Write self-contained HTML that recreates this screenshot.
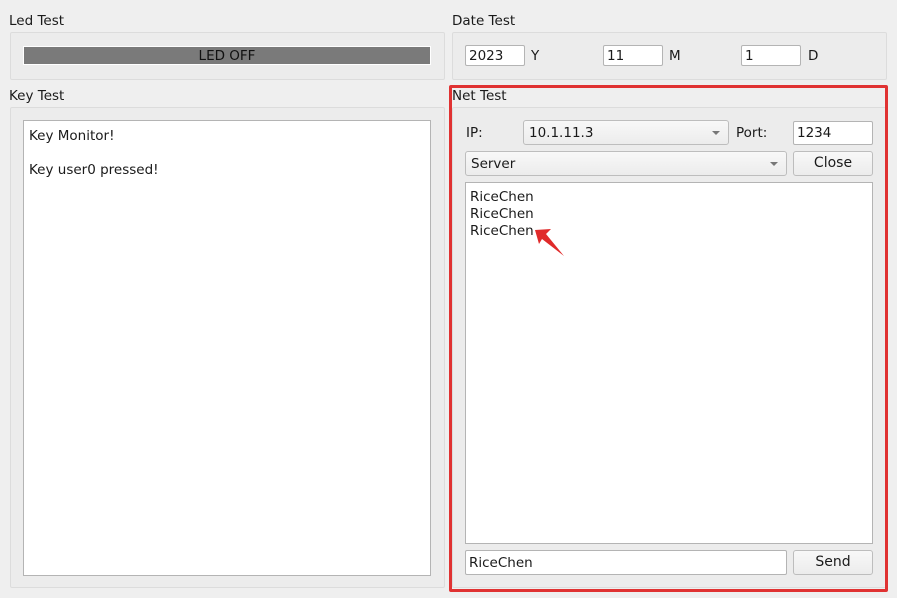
<!DOCTYPE html>
<html><head><meta charset="utf-8"><style>
*{box-sizing:border-box;margin:0;padding:0}
body{width:897px;height:598px;background:#efefef;position:relative;overflow:hidden;font-family:"DejaVu Sans","Liberation Sans",sans-serif;font-size:13.5px;color:#1a1a1a}
.a{position:absolute}
.lbl{position:absolute;font-size:13.5px;line-height:16px}
.grp{position:absolute;border:1px solid #dcdcdc;border-radius:2px;background:#ececec}
.inp{position:absolute;background:#fff;border:1px solid #b4b4b4;border-radius:2px;padding-left:3px;line-height:21px}
.cmb{position:absolute;background:linear-gradient(#f8f8f8,#ececec);border:1px solid #bdbdbd;border-radius:3px;padding-left:5px;line-height:24px}
.cmb:after{content:"";position:absolute;right:8px;top:10px;border-left:4px solid transparent;border-right:4px solid transparent;border-top:4px solid #777}
.btn{position:absolute;background:linear-gradient(#f8f8f8,#ececec);border:1px solid #bdbdbd;border-radius:3px;text-align:center;line-height:23px;font-size:14px}
.txt{position:absolute;background:#fff;border:1px solid #b4b4b4}
</style></head><body>
<div class="lbl" style="left:9px;top:13px">Led Test</div>
<div class="grp" style="left:10px;top:32px;width:435px;height:48px"></div>
<div class="a" style="left:23px;top:46px;width:408px;height:19px;background:#7a7a7a;border:1px solid #fff;text-align:center;line-height:18px;color:#111">LED OFF</div>

<div class="lbl" style="left:9px;top:88px">Key Test</div>
<div class="grp" style="left:10px;top:107px;width:435px;height:481px"></div>
<div class="txt" style="left:23px;top:120px;width:408px;height:456px;padding:7px 5px;line-height:17px">Key Monitor!<br><br>Key user0 pressed!</div>

<div class="lbl" style="left:452px;top:13px">Date Test</div>
<div class="grp" style="left:452px;top:32px;width:435px;height:48px"></div>
<div class="inp" style="left:465px;top:45px;width:60px;height:21px">2023</div>
<div class="lbl" style="left:531px;top:48px">Y</div>
<div class="inp" style="left:603px;top:45px;width:60px;height:21px">11</div>
<div class="lbl" style="left:669px;top:48px">M</div>
<div class="inp" style="left:741px;top:45px;width:60px;height:21px">1</div>
<div class="lbl" style="left:808px;top:48px">D</div>

<div class="lbl" style="left:452px;top:88px">Net Test</div>
<div class="grp" style="left:452px;top:107px;width:435px;height:481px"></div>
<div class="lbl" style="left:466px;top:125px">IP:</div>
<div class="cmb" style="left:523px;top:120px;width:206px;height:25px">10.1.11.3</div>
<div class="lbl" style="left:736px;top:125px">Port:</div>
<div class="inp" style="left:793px;top:121px;width:80px;height:24px;line-height:23px">1234</div>
<div class="cmb" style="left:465px;top:151px;width:322px;height:25px">Server</div>
<div class="btn" style="left:793px;top:151px;width:80px;height:25px">Close</div>
<div class="txt" style="left:465px;top:182px;width:408px;height:362px;padding:6px 4px;line-height:17px">RiceChen<br>RiceChen<br>RiceChen</div>
<div class="inp" style="left:465px;top:550px;width:322px;height:25px;line-height:24px">RiceChen</div>
<div class="btn" style="left:793px;top:550px;width:80px;height:25px">Send</div>

<svg class="a" style="left:0;top:0" width="897" height="598"><polygon points="535,230 551,229 546,234 564,256 542,239 539,244" fill="#e02a2a"/></svg>
<div class="a" style="left:449px;top:85px;width:439px;height:507px;border:3px solid #e03232;border-radius:2px"></div>
</body></html>
